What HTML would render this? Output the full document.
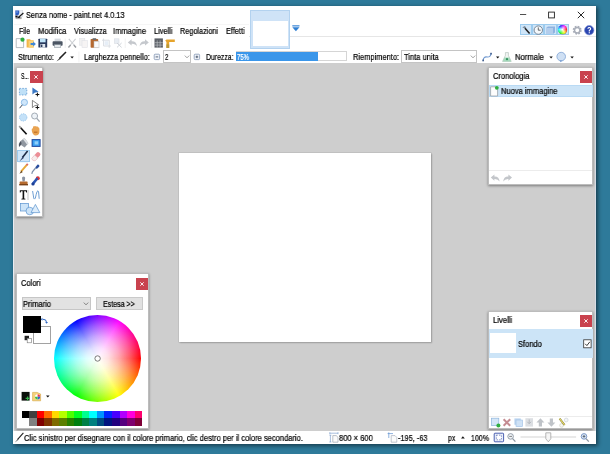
<!DOCTYPE html>
<html lang="it"><head><meta charset="utf-8"><title>Senza nome - paint.net 4.0.13</title>
<style>
html,body{margin:0;padding:0}
body{width:610px;height:454px;overflow:hidden;position:relative;background:#2e7a9a;font-family:"Liberation Sans",sans-serif;font-size:8px}
.a{position:absolute;box-sizing:border-box}
.t{position:absolute;white-space:nowrap;font-size:8.8px;will-change:transform;-webkit-text-stroke:0.22px currentColor;line-height:10px;transform-origin:0 50%;display:inline-block}
#win{left:13px;top:6px;width:583px;height:438px;background:#fff;box-shadow:1px 1.5px 4px 0.5px rgba(0,0,0,.48)}
#work{left:13px;top:63px;width:583px;height:368px;background:#cecece;border-left:1px solid #e8ecf2;border-right:1.6px solid #d8dde6}
#canvas{left:178.6px;top:152.9px;width:252.6px;height:189.3px;background:#fff;box-shadow:0 0 0 0.6px rgba(0,0,0,.1),1px 1px 1.5px rgba(0,0,0,.2)}
.panel{background:#fff;border:1px solid #bcbcbc;box-shadow:0.3px 0.8px 2.5px rgba(0,0,0,.4)}
.close{background:#c9424e}
.close svg{position:absolute;left:50%;top:50%;margin:-2px 0 0 -2px;width:4px;height:4px}
.sel{background:#cce4f7;border:1px solid #b9daf4}
.hl{background:#cfe5f8;border:1px solid #9ccbee}
.combo{background:#fff;border:1px solid #c4c4c4}
svg{overflow:visible}

</style></head><body>
<div class="a" id="win"></div>
<!-- title bar -->
<svg class="a" style="left:15px;top:10px" width="10" height="11" viewBox="0 0 10 11">
  <rect x="0.4" y="0.6" width="7.4" height="6" fill="#eef1f6" stroke="#c9d0dc" stroke-width="0.4"/>
  <path d="M0.4 0.6 H4.2 Q4.8 3 3.4 5.2 H0.4 Z" fill="#2f5fc4"/><rect x="1.2" y="1.4" width="1.6" height="1.2" fill="#7fa4e6"/>
  <rect x="0.4" y="5.6" width="2.2" height="1.8" fill="#0c0c14"/>
  <path d="M8.4 3 L3.6 7.2" stroke="#1a1a1a" stroke-width="1.2"/><path d="M4 6.6 L2.2 8 H5 Z" fill="#111"/>
  <rect x="0.6" y="7.6" width="6" height="0.8" fill="#222"/>
  <rect x="1.4" y="8.8" width="5" height="0.4" fill="#c9c9c9"/>
</svg>
<svg class="a" style="left:519px;top:9px" width="70" height="12" viewBox="0 0 70 12">
  <path d="M1 5.5 H7.2" stroke="#222" stroke-width="0.8" fill="none"/>
  <rect x="29.6" y="3.1" width="5.8" height="5.8" stroke="#222" stroke-width="0.9" fill="none"/>
  <path d="M58.8 2.8 L65.2 9.2 M65.2 2.8 L58.8 9.2" stroke="#111" stroke-width="0.9" fill="none"/>
</svg>
<!-- menu bar faint lines -->
<div class="a" style="left:14px;top:23.5px;width:235px;height:1px;background:#f6f6f6"></div>
<div class="a" style="left:249px;top:36px;width:347px;height:1px;background:#e6e6e6"></div>
<!-- image thumbnail tab -->
<div class="a" style="left:250px;top:9.6px;width:40px;height:39.7px;background:#cfe3f7;border:1px solid #b3d2ef"></div>
<div class="a" style="left:252.6px;top:20.7px;width:35.4px;height:25.8px;background:#fff"></div>
<svg class="a" style="left:292px;top:24.5px" width="8" height="7" viewBox="0 0 8 7">
  <rect x="0.3" y="0.2" width="7.2" height="1.3" fill="#4a90d9"/><path d="M0.3 2.3 H7.5 L3.9 6.2 Z" fill="#2f7fd3"/>
</svg>
<!-- top right utility buttons -->
<div class="a hl" style="left:519.9px;top:24.1px;width:12.4px;height:11px"></div>
<div class="a hl" style="left:532.1px;top:24.1px;width:12.4px;height:11px"></div>
<div class="a hl" style="left:544.3px;top:24.1px;width:12.4px;height:11px"></div>
<div class="a hl" style="left:556.5px;top:24.1px;width:12.4px;height:11px"></div>
<svg class="a" style="left:520px;top:23.5px" width="76" height="12" viewBox="0 0 76 12">
  <!-- tools (wand/hammer) -->
  <path d="M2.3 3.5 L4.5 2 L6.2 3.2 L5 4.6 Z" fill="#7a8a9a"/><path d="M5 4.2 L9.6 9.6" stroke="#222" stroke-width="1.6"/>
  <!-- clock -->
  <circle cx="18.3" cy="6.1" r="4.2" fill="#f4f8fc" stroke="#6c7c8c" stroke-width="0.9"/><path d="M18.3 3.4 V6.2 H20.6" stroke="#444" stroke-width="0.8" fill="none"/>
  <!-- layers -->
  <path d="M26 4 L28 2.4 H35 V8.4 L33 10 H26 Z" fill="#8fb3e0"/><rect x="26" y="4" width="7" height="6" fill="#b3cdec"/>
  <!-- color wheel -->
  <circle cx="42.7" cy="6.1" r="4.5" fill="#888"/>
  <!-- gear -->
  <circle cx="57.2" cy="6.2" r="3.4" fill="none" stroke="#a9aeb9" stroke-width="2.2" stroke-dasharray="1.6 1.07"/><circle cx="57.2" cy="6.2" r="2.7" fill="none" stroke="#a9aeb9" stroke-width="1.5"/>
  <!-- help -->
  <circle cx="69.2" cy="6.2" r="4.7" fill="#2b46b0"/><circle cx="69.2" cy="6.2" r="4.7" fill="none" stroke="#7f92d6" stroke-width="0.7"/>
  <path d="M67.7 4.6 Q69.3 2.6 70.6 4.3 Q70.9 5.5 69.3 6.5 V7.4" stroke="#fff" stroke-width="1.1" fill="none"/><rect x="68.7" y="8.2" width="1.2" height="1.1" fill="#fff"/>
</svg>
<div class="a" style="left:558.4px;top:25.4px;width:8.6px;height:8.6px;border-radius:50%;background:radial-gradient(circle,#fff 0,rgba(255,255,255,0) 75%),conic-gradient(from 90deg,#f00,#ff0,#0f0,#0ff,#00f,#f0f,#f00)"></div>
<!-- toolbar row 1 -->
<svg class="a" style="left:14px;top:37px" width="170" height="12" viewBox="0 0 170 12">
  <!-- new -->
  <path d="M2.2 1.6 H7.4 L9.6 3.8 V10.6 H2.2 Z" fill="#fdfdfd" stroke="#9aa0a8" stroke-width="0.7"/><circle cx="8.5" cy="2.7" r="2.1" fill="#2fae3f"/>
  <!-- open -->
  <path d="M12.6 2.2 H16 L17 3.2 H19.6 V10.6 H12.6 Z" fill="#f3b64a"/><path d="M14.6 3.6 H19.8 V10.6 H14.6 Z" fill="#f8d27a"/><path d="M16.6 6 H19.2 V4.6 L21.9 7 L19.2 9.4 V8 H16.6 Z" fill="#3f86d6"/>
  <!-- save -->
  <rect x="24.4" y="1.7" width="8.8" height="8.9" rx="0.6" fill="#2a3a5e"/><rect x="26" y="1.7" width="5.6" height="3.6" fill="#bfe3f8"/><rect x="26.4" y="7" width="4.8" height="3.6" fill="#dfe6ee"/><rect x="27" y="7.6" width="1.4" height="2.4" fill="#2a3a5e"/>
  <!-- print -->
  <rect x="40.6" y="1.6" width="6" height="3" fill="#d5dae0"/><rect x="38.6" y="4.2" width="10" height="4.6" rx="0.8" fill="#4b5563"/><rect x="40.4" y="7.6" width="6.4" height="3" fill="#e4e8ec" stroke="#7d8792" stroke-width="0.5"/>
  <rect x="50.8" y="1.5" width="0.7" height="9.5" fill="#ececec"/>
  <!-- cut -->
  <path d="M54.8 1.8 L60 8 M61.6 1.8 L56.4 8" stroke="#cdd0d4" stroke-width="1.1" fill="none"/><path d="M56.6 8 L54.4 10.4 M59.8 8 L62 10.4" stroke="#9a9da2" stroke-width="1.5" fill="none"/>
  <!-- copy -->
  <rect x="65.6" y="1.6" width="5.2" height="6.6" fill="#f1f1f1" stroke="#e0e2e6" stroke-width="0.6"/><rect x="68" y="3.6" width="5.4" height="7" fill="#f6f4f4" stroke="#e0e2e6" stroke-width="0.6"/>
  <!-- paste -->
  <rect x="76.6" y="2" width="7.6" height="8.8" rx="0.7" fill="#b5682f"/><rect x="78.6" y="1.2" width="3.6" height="1.8" fill="#6a6a6a"/><rect x="80" y="4.2" width="5" height="6.6" fill="#fafafa" stroke="#b9b9b9" stroke-width="0.5"/>
  <!-- crop (disabled) -->
  <path d="M89.6 1.6 V9 H96.8 M88 3.2 H95.2 V10.8" stroke="#d9dde3" stroke-width="1" fill="none"/><rect x="90.6" y="4.2" width="3.6" height="3.8" fill="#e6eef7"/>
  <!-- deselect (disabled) -->
  <rect x="100.4" y="1.8" width="4.6" height="4.6" fill="#e8edf3" stroke="#d9dde3" stroke-width="0.6"/><path d="M103 6 L107.6 10.4 M107.6 6 L103 10.4" stroke="#d0d4da" stroke-width="1"/>
  <rect x="110.8" y="1.5" width="0.7" height="9.5" fill="#ececec"/>
  <!-- undo -->
  <path d="M113.8 5.4 L117.6 2.2 V4.2 Q122.6 4 123 9.6 Q121.4 6.6 117.6 6.8 V8.6 Z" fill="#c5c8cd"/>
  <!-- redo -->
  <path d="M134.8 5.4 L131 2.2 V4.2 Q126 4 125.6 9.6 Q127.2 6.6 131 6.8 V8.6 Z" fill="#c5c8cd"/>
  <rect x="137.4" y="1.5" width="0.7" height="9.5" fill="#ececec"/>
  <!-- grid -->
  <rect x="140.5" y="1.4" width="8.4" height="9.2" fill="#5b5f66"/>
  <path d="M143.2 3.4 V10.6 M146.1 3.4 V10.6 M140.5 5.7 H148.9 M140.5 8.1 H148.9" stroke="#c9ccd0" stroke-width="0.6"/>
  <!-- ruler -->
  <path d="M151.2 3.6 L152.6 2.4 H160.8 V4.9 H155.2 V10.9 H152.4 V4.9 L151.2 3.6 Z" fill="#e6a42c"/><path d="M152.4 7.4 H155.2 V10.9 H152.4 Z" fill="#b8983a"/>
</svg>
<!-- toolbar row 2 -->
<svg class="a" style="left:54px;top:51px" width="26" height="12" viewBox="0 0 26 12">
  <path d="M12 1 L5.4 7.6" stroke="#222" stroke-width="1.5"/><path d="M5.6 7 L2.4 10.6 L6.4 8 Z" fill="#333"/>
  <path d="M16.4 5.4 H19.8 L18.1 7.4 Z" fill="#111"/>
  <rect x="24.6" y="0.5" width="0.7" height="11" fill="#ececec"/>
</svg>
<svg class="a" style="left:153px;top:53px" width="50" height="8" viewBox="0 0 50 8">
  <rect x="1.2" y="1.2" width="5.4" height="5.4" rx="1" fill="#eef2f8" stroke="#8395b3" stroke-width="0.8"/><path d="M2.6 3.9 H5.2" stroke="#39465e" stroke-width="0.8"/>
  <rect x="41.2" y="1.2" width="5.4" height="5.4" rx="1" fill="#eef2f8" stroke="#8395b3" stroke-width="0.8"/><path d="M42.6 3.9 H45.2 M43.9 2.6 V5.2" stroke="#39465e" stroke-width="0.8"/>
</svg>
<div class="a combo" style="left:163.3px;top:50.4px;width:28.2px;height:12.2px"></div>
<svg class="a" style="left:183.5px;top:55px" width="6" height="4" viewBox="0 0 6 4"><path d="M0.8 0.6 L3 2.8 L5.2 0.6" stroke="#777" stroke-width="0.7" fill="none"/></svg>
<div class="a" style="left:235.6px;top:51.4px;width:111.2px;height:10px;background:#fff;border:1px solid #d5d5d5"></div>
<div class="a" style="left:236px;top:51.6px;width:82.3px;height:9.6px;background:#3a96ea"></div>
<div class="a combo" style="left:401.3px;top:50.2px;width:76.2px;height:12.4px"></div>
<svg class="a" style="left:469.5px;top:55px" width="6" height="4" viewBox="0 0 6 4"><path d="M0.8 0.6 L3 2.8 L5.2 0.6" stroke="#777" stroke-width="0.7" fill="none"/></svg>
<svg class="a" style="left:480px;top:51px" width="100" height="12" viewBox="0 0 100 12">
  <path d="M3.2 9.4 Q3.4 5.4 7 6 Q10.6 6.4 11 2.6" stroke="#7098cf" stroke-width="1.1" fill="none"/><rect x="2.3" y="8.6" width="1.7" height="1.7" fill="#44608f"/><rect x="10.2" y="1.8" width="1.7" height="1.7" fill="#44608f"/>
  <path d="M16 5.4 H19.4 L17.7 7.4 Z" fill="#111"/>
  <path d="M25.4 1.6 H28.4 V4.4 L31.2 10.4 H22.6 L25.4 4.4 Z" fill="#f1f5f3" stroke="#a9b8b0" stroke-width="0.6"/><path d="M24.4 6.6 H29.4 L31.2 10.4 H22.6 Z" fill="#a5d9bb"/><circle cx="27" cy="8.2" r="1.1" fill="#2f8f5c"/>
  <path d="M69.4 5.4 H72.8 L71.1 7.4 Z" fill="#111"/>
  <circle cx="81.2" cy="5.6" r="4.3" fill="#cfe0f4" stroke="#7fa3d4" stroke-width="0.8"/><path d="M79.6 9 L80.4 11.2 L82.8 9.4 Z" fill="#7fa3d4"/>
  <path d="M90.4 5.4 H93.8 L92.1 7.4 Z" fill="#111"/>
</svg>
<!-- work area -->
<div class="a" id="work"></div>
<div class="a" id="canvas"></div>
<!-- tools panel -->
<div class="a panel" style="left:16px;top:66.6px;width:27.4px;height:150.5px"></div>
<div class="a close" style="left:30.2px;top:71px;width:12.4px;height:11.8px"><svg viewBox="0 0 4 4"><path d="M0.3 0.3 L3.7 3.7 M3.7 0.3 L0.3 3.7" stroke="#fff" stroke-width="0.9"/></svg></div>
<div class="a hl" style="left:17.2px;top:149.8px;width:12.6px;height:12.6px"></div>
<svg class="a" style="left:17px;top:85px" width="26" height="131" viewBox="0 0 26 131">
  <!-- r1: rect select, move selection -->
  <rect x="2.4" y="3.4" width="7.4" height="6.6" fill="#bfe0f7"/><path d="M2.4 3.4 H9.8 V10 H2.4 Z" fill="none" stroke="#4f8ccc" stroke-width="0.7" stroke-dasharray="1.5 1.4"/>
  <path d="M15.4 2.4 L15.4 9.6 L17.6 7.8 L21.6 6.8 Z" fill="#3b78c4"/><path d="M20.4 7.6 V11.4 M18.5 9.5 H22.3" stroke="#111" stroke-width="1"/>
  <!-- r2: lasso/zoom-ish, move pixels -->
  <circle cx="7.4" cy="17.4" r="3.1" fill="#cfe6fa" stroke="#86b8e6" stroke-width="0.9"/><path d="M5.4 19.8 L2.6 23.2" stroke="#3a4658" stroke-width="1"/>
  <path d="M15.4 15.4 L15.4 22.6 L17.6 20.8 L21.6 19.8 Z" fill="#fff" stroke="#555" stroke-width="0.7"/><path d="M20.4 20.6 V24.4 M18.5 22.5 H22.3" stroke="#111" stroke-width="1"/>
  <!-- r3: ellipse select, zoom -->
  <circle cx="6.2" cy="32.4" r="3.7" fill="#c4e1f8" stroke="#8fc0ea" stroke-width="0.8" stroke-dasharray="1.4 1"/>
  <circle cx="17.6" cy="31" r="3" fill="#eef3f8" stroke="#9aa3ad" stroke-width="0.9"/><path d="M19.8 33.4 L22.6 36.6" stroke="#9aa3ad" stroke-width="1.3"/>
  <!-- r4: magic wand, pan hand -->
  <g transform="translate(0,0.9)"><path d="M3.4 41.6 L9.6 48.4" stroke="#111" stroke-width="1.7"/><path d="M2.2 40.2 L4.2 42.4" stroke="#999" stroke-width="1.7"/>
  <path d="M14.8 45 Q14.2 42.4 15.8 42.4 L16.2 40.6 Q17.2 39.6 18 40.6 Q19 39.6 19.8 40.8 Q21 40.2 21.4 41.6 Q22.4 41.6 22.4 43 V46.4 Q21.8 49.6 18.6 49.6 Q15.8 49.4 14.8 45 Z" fill="#e9a351"/><path d="M16.8 45.6 h3.6 v1.5 h-3.6 z" fill="#c9782c"/></g>
  <!-- r5: bucket, gradient -->
  <g transform="translate(0,0.9)"><path d="M3.6 55.2 L7.4 52.2 L11.4 57.4 L7.6 61.6 L4 59.2 Z" fill="#9097a0"/><path d="M3.4 55 Q1.2 57.6 2 61 Q4.4 59.6 4.6 57 Z" fill="#4f5560"/><path d="M7.4 52.2 L11.4 57.4 L10 58.6 L6 53.4 Z" fill="#dfe2e6"/>
  <rect x="14.6" y="53.2" width="9" height="7.8" fill="#1c469e"/><rect x="15.6" y="54.2" width="7" height="5.8" fill="#3a9ff0"/><rect x="17.6" y="55.4" width="3.6" height="3.2" fill="#8fd0fb"/></g>
  <!-- r6: paintbrush (selected), eraser -->
  <path d="M10.6 66 L5.4 72.4" stroke="#1d2a44" stroke-width="1.6"/><path d="M5.8 71.6 L2.6 76.2 L6.8 73 Z" fill="#2c3e66"/><path d="M1.4 76.8 H11" stroke="#a9cdee" stroke-width="0.6"/>
  <path d="M15 73 L19.8 67.4 Q21 66.4 22.2 67.4 L23.2 68.6 Q23.8 69.8 22.8 70.8 L18.4 75.6 Q17.2 76.2 16.2 75.4 L15 74.4 Q14.4 73.8 15 73 Z" fill="#ec8e97"/><path d="M15 73 L17.6 70 L20.8 73 L18.4 75.6 Q17.2 76.2 16.2 75.4 L15 74.4 Q14.4 73.8 15 73 Z" fill="#f7eeee" stroke="#e3b9bd" stroke-width="0.4"/>
  <!-- r7: pencil, color picker -->
  <path d="M10 79.6 L4 86.6" stroke="#e7a93a" stroke-width="1.9"/><path d="M4.4 85.4 L2.4 88.8 L5.6 87.2 Z" fill="#6b4a24"/><path d="M10.8 78.8 L9.6 80.2" stroke="#d96a6a" stroke-width="1.9"/>
  <path d="M20.6 79.4 Q22.6 79.2 22.4 81.4 L19.8 84 L18.2 82.4 Z" fill="#2b4f9e"/><path d="M18.6 83 L15.4 86.8 L14.8 88.8" stroke="#7d8ea8" stroke-width="1.2" fill="none"/>
  <!-- r8: clone stamp, recolor -->
  <path d="M5 93 Q5 91.4 6.6 91.4 Q8.2 91.4 8.2 93 L7.6 96.6 H5.6 Z" fill="#8a93a2"/><rect x="2.6" y="96.4" width="8" height="2.6" rx="0.6" fill="#b56a2e"/><rect x="2.2" y="99" width="8.8" height="1.4" fill="#7a4318"/>
  <circle cx="20.8" cy="93.2" r="2" fill="#d8343a"/><path d="M19.8 94 L16 98.6" stroke="#2a56b4" stroke-width="2.6" stroke-linecap="round"/><circle cx="16" cy="99" r="1.6" fill="#1d3f94"/>
  <!-- r9: text, line/curve -->
  <path d="M2.8 105.2 H10 V107.4 H9.2 L8.8 106.2 H7.2 V113.4 L8.4 113.8 V114.4 H4.4 V113.8 L5.6 113.4 V106.2 H4 L3.6 107.4 H2.8 Z" fill="#111"/><path d="M11 105 V115" stroke="#888" stroke-width="0.5"/>
  <path d="M15.6 106 L16.8 113.4 Q17.4 115 18.4 113 Q19.2 109 20 106.6 Q21 104.8 21.6 107 L22.2 113.8" stroke="#4a86c8" stroke-width="0.8" fill="none"/>
  <!-- r10: shapes -->
  <rect x="3.6" y="118.4" width="8" height="7.6" fill="#cde4f8" stroke="#5b93cf" stroke-width="0.7"/><circle cx="12.8" cy="126" r="3.8" fill="#cde4f8" stroke="#5b93cf" stroke-width="0.7"/><path d="M18.4 119.4 L22.8 127.6 H14 Z" fill="#dcecfa" stroke="#5b93cf" stroke-width="0.7"/>
</svg>
<!-- history panel -->
<div class="a panel" style="left:487.8px;top:66.6px;width:105.6px;height:118.2px"></div>
<div class="a close" style="left:579.9px;top:70.8px;width:12.6px;height:12.4px"><svg viewBox="0 0 4 4"><path d="M0.3 0.3 L3.7 3.7 M3.7 0.3 L0.3 3.7" stroke="#fff" stroke-width="0.9"/></svg></div>
<div class="a sel" style="left:488.8px;top:85.3px;width:103.8px;height:11.8px"></div>
<svg class="a" style="left:489px;top:85px" width="12" height="12" viewBox="0 0 12 12"><path d="M1.6 1.8 H6.6 L8.6 3.8 V11 H1.6 Z" fill="#fdfdfd" stroke="#8f969e" stroke-width="0.7"/><circle cx="7.8" cy="2.8" r="1.9" fill="#2fae3f"/></svg>
<div class="a" style="left:489px;top:170px;width:103.4px;height:1px;background:#ececec"></div>
<svg class="a" style="left:490px;top:173px" width="24" height="10" viewBox="0 0 24 10">
  <path d="M0.8 4.6 L4.4 1.4 V3.4 Q9.2 3.2 9.6 8.6 Q8 5.8 4.4 6 V7.8 Z" fill="#c3c6ca"/>
  <path d="M22 4.6 L18.4 1.4 V3.4 Q13.6 3.2 13.2 8.6 Q14.8 5.8 18.4 6 V7.8 Z" fill="#c3c6ca"/>
</svg>
<!-- colors panel -->
<div class="a panel" style="left:16px;top:273.1px;width:132.6px;height:155.9px"></div>
<div class="a close" style="left:136px;top:278px;width:12.2px;height:11.8px"><svg viewBox="0 0 4 4"><path d="M0.3 0.3 L3.7 3.7 M3.7 0.3 L0.3 3.7" stroke="#fff" stroke-width="0.9"/></svg></div>
<div class="a" style="left:21.6px;top:297px;width:69.4px;height:13.2px;background:#e2e2e2;border:1px solid #c6c6c6"></div>
<svg class="a" style="left:83.2px;top:301.6px" width="6" height="4" viewBox="0 0 6 4"><path d="M0.8 0.6 L3 2.8 L5.2 0.6" stroke="#555" stroke-width="0.7" fill="none"/></svg>
<div class="a" style="left:96.1px;top:296.6px;width:46.8px;height:13.8px;background:#e1e1e1;border:1px solid #cacaca"></div>
<div class="a" style="left:33.1px;top:325.5px;width:17.7px;height:18.2px;background:#fff;border:1px solid #a2a2a2"></div>
<div class="a" style="left:23.2px;top:315.8px;width:17.6px;height:17.3px;background:#000"></div>
<svg class="a" style="left:23.5px;top:316.6px" width="26" height="27" viewBox="0 0 26 27">
  <path d="M18.6 2.2 Q22.6 2 22.6 5.6" stroke="#2f66c0" stroke-width="1" fill="none"/><path d="M18.4 0.8 V3.8 L16.8 2.3 Z" fill="#2f66c0"/><path d="M21.2 5 H24 L22.6 6.8 Z" fill="#2f66c0"/>
  <rect x="0.6" y="18.8" width="4.4" height="4.4" fill="#222"/><rect x="3.2" y="21.4" width="4.4" height="4.4" fill="#fff" stroke="#777" stroke-width="0.6"/>
</svg>
<div class="a" style="left:54px;top:314.6px;width:87.4px;height:87.4px;border-radius:50%;background:radial-gradient(circle closest-side,#fff 0,rgba(255,255,255,.875) 25%,rgba(255,255,255,.65) 50%,rgba(255,255,255,.35) 75%,rgba(255,255,255,0) 100%),conic-gradient(from 90deg,#f00,#ff0,#0f0,#0ff,#00f,#f0f,#f00)"></div>
<svg class="a" style="left:93px;top:354px" width="9" height="9" viewBox="0 0 9 9"><circle cx="4.6" cy="4.5" r="2.7" fill="rgba(255,255,255,.7)" stroke="#5a5a5a" stroke-width="0.8"/></svg>
<svg class="a" style="left:21px;top:391px" width="30" height="11" viewBox="0 0 30 11">
  <rect x="0.6" y="0.9" width="8" height="8.7" fill="#0a0f0a"/><path d="M6.6 5.4 V9.4 M4.6 7.4 H8.6" stroke="#35b24a" stroke-width="1.2"/>
  <path d="M11.6 1.4 H16 L19.6 3 V9.8 H11.6 Z" fill="#f4d27c" stroke="#d3a23f" stroke-width="0.6"/><circle cx="16.6" cy="5.8" r="2.6" fill="#fff"/><path d="M16.6 3.2 A2.6 2.6 0 0 1 19.2 5.8 H16.6 Z" fill="#e34"/><path d="M19.2 5.8 A2.6 2.6 0 0 1 16.6 8.4 V5.8 Z" fill="#36c"/><path d="M16.6 8.4 A2.6 2.6 0 0 1 14 5.8 H16.6 Z" fill="#4b4"/>
  <path d="M25 4.6 H28.6 L26.8 6.6 Z" fill="#111"/>
</svg>
<!-- palette -->
<div class="a" style="left:21.60px;top:410.9px;width:7.58px;height:7.5px;background:#000000"></div>
<div class="a" style="left:29.13px;top:410.9px;width:7.58px;height:7.5px;background:#404040"></div>
<div class="a" style="left:36.66px;top:410.9px;width:7.58px;height:7.5px;background:#FF0000"></div>
<div class="a" style="left:44.19px;top:410.9px;width:7.58px;height:7.5px;background:#FF6A00"></div>
<div class="a" style="left:51.73px;top:410.9px;width:7.58px;height:7.5px;background:#FFD800"></div>
<div class="a" style="left:59.26px;top:410.9px;width:7.58px;height:7.5px;background:#B6FF00"></div>
<div class="a" style="left:66.79px;top:410.9px;width:7.58px;height:7.5px;background:#4CFF00"></div>
<div class="a" style="left:74.32px;top:410.9px;width:7.58px;height:7.5px;background:#00FF21"></div>
<div class="a" style="left:81.85px;top:410.9px;width:7.58px;height:7.5px;background:#00FF90"></div>
<div class="a" style="left:89.38px;top:410.9px;width:7.58px;height:7.5px;background:#00FFFF"></div>
<div class="a" style="left:96.91px;top:410.9px;width:7.58px;height:7.5px;background:#0094FF"></div>
<div class="a" style="left:104.44px;top:410.9px;width:7.58px;height:7.5px;background:#0026FF"></div>
<div class="a" style="left:111.97px;top:410.9px;width:7.58px;height:7.5px;background:#4800FF"></div>
<div class="a" style="left:119.51px;top:410.9px;width:7.58px;height:7.5px;background:#B200FF"></div>
<div class="a" style="left:127.04px;top:410.9px;width:7.58px;height:7.5px;background:#FF00DC"></div>
<div class="a" style="left:134.57px;top:410.9px;width:7.58px;height:7.5px;background:#FF006E"></div>
<div class="a" style="left:29.13px;top:418.3px;width:7.58px;height:7.5px;background:#808080"></div>
<div class="a" style="left:36.66px;top:418.3px;width:7.58px;height:7.5px;background:#7F0000"></div>
<div class="a" style="left:44.19px;top:418.3px;width:7.58px;height:7.5px;background:#7F3300"></div>
<div class="a" style="left:51.73px;top:418.3px;width:7.58px;height:7.5px;background:#7F6A00"></div>
<div class="a" style="left:59.26px;top:418.3px;width:7.58px;height:7.5px;background:#5B7F00"></div>
<div class="a" style="left:66.79px;top:418.3px;width:7.58px;height:7.5px;background:#267F00"></div>
<div class="a" style="left:74.32px;top:418.3px;width:7.58px;height:7.5px;background:#007F0E"></div>
<div class="a" style="left:81.85px;top:418.3px;width:7.58px;height:7.5px;background:#007F46"></div>
<div class="a" style="left:89.38px;top:418.3px;width:7.58px;height:7.5px;background:#007F7F"></div>
<div class="a" style="left:96.91px;top:418.3px;width:7.58px;height:7.5px;background:#004A7F"></div>
<div class="a" style="left:104.44px;top:418.3px;width:7.58px;height:7.5px;background:#00137F"></div>
<div class="a" style="left:111.97px;top:418.3px;width:7.58px;height:7.5px;background:#21007F"></div>
<div class="a" style="left:119.51px;top:418.3px;width:7.58px;height:7.5px;background:#57007F"></div>
<div class="a" style="left:127.04px;top:418.3px;width:7.58px;height:7.5px;background:#7F006E"></div>
<div class="a" style="left:134.57px;top:418.3px;width:7.58px;height:7.5px;background:#7F0037"></div>
<!-- layers panel -->
<div class="a panel" style="left:487.8px;top:310.6px;width:105.6px;height:118.6px"></div>
<div class="a close" style="left:579.9px;top:315px;width:12.6px;height:12.4px"><svg viewBox="0 0 4 4"><path d="M0.3 0.3 L3.7 3.7 M3.7 0.3 L0.3 3.7" stroke="#fff" stroke-width="0.9"/></svg></div>
<div class="a" style="left:488.8px;top:329.4px;width:103.8px;height:28.2px;background:#cce4f7"></div>
<div class="a" style="left:490px;top:333px;width:25.8px;height:19.9px;background:#fff"></div>
<svg class="a" style="left:583px;top:339px" width="9" height="10" viewBox="0 0 9 10"><rect x="0.7" y="0.8" width="7.4" height="8" fill="#fff" stroke="#333" stroke-width="0.8"/><path d="M2.2 4.8 L3.9 6.6 L6.8 2.8" stroke="#222" stroke-width="0.9" fill="none"/></svg>
<div class="a" style="left:489px;top:416px;width:103.4px;height:1px;background:#ececec"></div>
<svg class="a" style="left:490px;top:417px" width="80" height="11" viewBox="0 0 80 11">
  <rect x="1.4" y="1.2" width="7.4" height="7.4" fill="#d4e6f7" stroke="#8fb4dc" stroke-width="0.7"/><circle cx="8.4" cy="8.4" r="2" fill="#2fae3f"/>
  <path d="M13.6 2.2 L20.2 8.8 M20.2 2.2 L13.6 8.8" stroke="#c58c92" stroke-width="2"/>
  <rect x="24.4" y="1.4" width="6.4" height="6.4" fill="#bcd5f0"/><rect x="26" y="3" width="6.6" height="6.6" fill="#cfe2f6" stroke="#9cbfe4" stroke-width="0.6"/>
  <rect x="35.4" y="1.2" width="7.6" height="8.4" fill="#dcdfe3"/><path d="M39.2 2.4 V6.4 M37.4 4.8 L39.2 6.8 L41 4.8" stroke="#b4b8be" stroke-width="1" fill="none"/>
  <path d="M50.4 1.2 L54.4 5.4 H52 V9.6 H48.8 V5.4 H46.4 Z" fill="#bfc3c8"/>
  <path d="M61.4 9.8 L65.4 5.6 H63 V1.4 H59.8 V5.6 H57.4 Z" fill="#bfc3c8"/>
  <circle cx="76.2" cy="3" r="1.9" fill="#f4f6f8" stroke="#c5ccd4" stroke-width="0.6"/><circle cx="71.6" cy="8.4" r="1.9" fill="#f7f7f2" stroke="#c9c9bd" stroke-width="0.6"/><path d="M69.6 1.6 L74.6 8" stroke="#7d7436" stroke-width="2"/><path d="M69.6 1.6 L74.6 8" stroke="#eadf6a" stroke-width="1.1"/>
</svg>
<!-- status bar -->
<div class="a" style="left:13px;top:431px;width:583px;height:13px;background:#fff"></div>
<svg class="a" style="left:14px;top:432px" width="10" height="11" viewBox="0 0 10 11"><path d="M9.4 0.8 L3.4 7.6" stroke="#222" stroke-width="1.1"/><path d="M3.8 6.8 L0.8 10.4 L4.6 7.8 Z" fill="#6b6b6b"/></svg>
<svg class="a" style="left:329px;top:432px" width="10" height="11" viewBox="0 0 10 11"><path d="M0.8 1.2 H9 M0.8 0.2 V2.2 M9 0.2 V2.2 M1.4 3.2 V10 M0.4 3.2 H2.4 M0.4 10 H2.4" stroke="#6d94c8" stroke-width="0.6" fill="none"/><path d="M3.8 3.6 H7.2 L9 5.4 V10.2 H3.8 Z" fill="#fbfbfb" stroke="#8d97a4" stroke-width="0.6"/></svg>
<svg class="a" style="left:387px;top:432px" width="11" height="11" viewBox="0 0 11 11"><path d="M0.6 1.6 H6 M1.8 0.4 V6" stroke="#5c8fd0" stroke-width="0.7" fill="none"/><path d="M4.2 3.6 H8 L9.8 5.4 V10.2 H4.2 Z" fill="#fbfbfb" stroke="#9aa3b0" stroke-width="0.6"/></svg>
<svg class="a" style="left:460px;top:435px" width="6" height="5" viewBox="0 0 6 5"><path d="M1 3.6 H4.8 L2.9 1.2 Z" fill="#111"/></svg>
<svg class="a" style="left:493px;top:432px" width="100" height="11" viewBox="0 0 100 11">
  <rect x="1.2" y="1.2" width="9.4" height="8.6" rx="0.8" fill="#e9eef9" stroke="#3a50a8" stroke-width="0.9"/><rect x="3.4" y="3.2" width="5" height="4.6" fill="#fff" stroke="#3a50a8" stroke-width="0.6" stroke-dasharray="1.4 1.2"/>
  <circle cx="17.6" cy="4.4" r="2.8" fill="#eef2f6" stroke="#8b95a1" stroke-width="0.9"/><path d="M19.6 6.6 L22.4 9.6" stroke="#8b95a1" stroke-width="1.3"/><path d="M16.2 4.4 H19" stroke="#555" stroke-width="0.7"/>
  <rect x="27.5" y="4.6" width="55.6" height="0.8" fill="#c9c9c9"/>
  <path d="M52.8 0.8 H57.8 V6.8 L55.3 9.8 L52.8 6.8 Z" fill="#f6f6f6" stroke="#9b9b9b" stroke-width="0.7"/>
  <circle cx="91" cy="4.4" r="2.8" fill="#dfe9f6" stroke="#6f8fc0" stroke-width="0.9"/><path d="M93 6.6 L95.8 9.6" stroke="#8b95a1" stroke-width="1.3"/><path d="M89.6 4.4 H92.4 M91 3 V5.8" stroke="#345" stroke-width="0.7"/>
</svg>

<!-- text labels -->
<span class="t" id="t0" style="left:26.0px;top:10.1px;color:#000;transform:scaleX(0.8356);">Senza nome - paint.net 4.0.13</span>
<span class="t" id="t1" style="left:18.7px;top:25.9px;color:#000;transform:scaleX(0.7824);">File</span>
<span class="t" id="t2" style="left:37.7px;top:25.9px;color:#000;transform:scaleX(0.8668);">Modifica</span>
<span class="t" id="t3" style="left:73.6px;top:25.9px;color:#000;transform:scaleX(0.8288);">Visualizza</span>
<span class="t" id="t4" style="left:112.9px;top:25.9px;color:#000;transform:scaleX(0.8570);">Immagine</span>
<span class="t" id="t5" style="left:153.7px;top:25.9px;color:#000;transform:scaleX(0.8403);">Livelli</span>
<span class="t" id="t6" style="left:179.8px;top:25.9px;color:#000;transform:scaleX(0.8264);">Regolazioni</span>
<span class="t" id="t7" style="left:225.6px;top:25.9px;color:#000;transform:scaleX(0.8369);">Effetti</span>
<span class="t" id="t8" style="left:18.1px;top:51.9px;color:#000;transform:scaleX(0.8366);">Strumento:</span>
<span class="t" id="t9" style="left:83.6px;top:51.9px;color:#000;transform:scaleX(0.8292);">Larghezza pennello:</span>
<span class="t" id="t10" style="left:165.0px;top:51.9px;color:#000;transform:scaleX(0.6726);">2</span>
<span class="t" id="t11" style="left:206.0px;top:51.9px;color:#000;transform:scaleX(0.7812);">Durezza:</span>
<span class="t" id="t12" style="left:237.0px;top:51.9px;color:#fff;transform:scaleX(0.6815);">75%</span>
<span class="t" id="t13" style="left:352.6px;top:51.9px;color:#000;transform:scaleX(0.8493);">Riempimento:</span>
<span class="t" id="t14" style="left:403.5px;top:51.9px;color:#000;transform:scaleX(0.8540);">Tinta unita</span>
<span class="t" id="t15" style="left:515.0px;top:51.9px;color:#000;transform:scaleX(0.8692);">Normale</span>
<span class="t" id="t16" style="left:21.0px;top:70.8px;color:#000;transform:scaleX(0.5832);">S...</span>
<span class="t" id="t17" style="left:493.2px;top:70.8px;color:#000;transform:scaleX(0.8532);">Cronologia</span>
<span class="t" id="t18" style="left:500.7px;top:86.3px;color:#000;transform:scaleX(0.8559);">Nuova immagine</span>
<span class="t" id="t19" style="left:20.8px;top:277.8px;color:#000;transform:scaleX(0.8528);">Colori</span>
<span class="t" id="t20" style="left:23.0px;top:299.1px;color:#000;transform:scaleX(0.8550);">Primario</span>
<span class="t" id="t21" style="left:103.1px;top:299.1px;color:#000;transform:scaleX(0.8025);">Estesa &gt;&gt;</span>
<span class="t" id="t22" style="left:492.8px;top:315.1px;color:#000;transform:scaleX(0.8721);">Livelli</span>
<span class="t" id="t23" style="left:518.0px;top:338.8px;color:#000;transform:scaleX(0.8533);">Sfondo</span>
<span class="t" id="t24" style="left:23.8px;top:433.0px;color:#000;transform:scaleX(0.8578);">Clic sinistro per disegnare con il colore primario, clic destro per il colore secondario.</span>
<span class="t" id="t25" style="left:339.0px;top:433.0px;color:#000;transform:scaleX(0.8581);">800 × 600</span>
<span class="t" id="t26" style="left:397.7px;top:433.0px;color:#000;transform:scaleX(0.8376);">-195, -63</span>
<span class="t" id="t27" style="left:447.5px;top:433.0px;color:#000;transform:scaleX(0.7852);">px</span>
<span class="t" id="t28" style="left:470.5px;top:433.0px;color:#000;transform:scaleX(0.8000);">100%</span>
</body></html>
